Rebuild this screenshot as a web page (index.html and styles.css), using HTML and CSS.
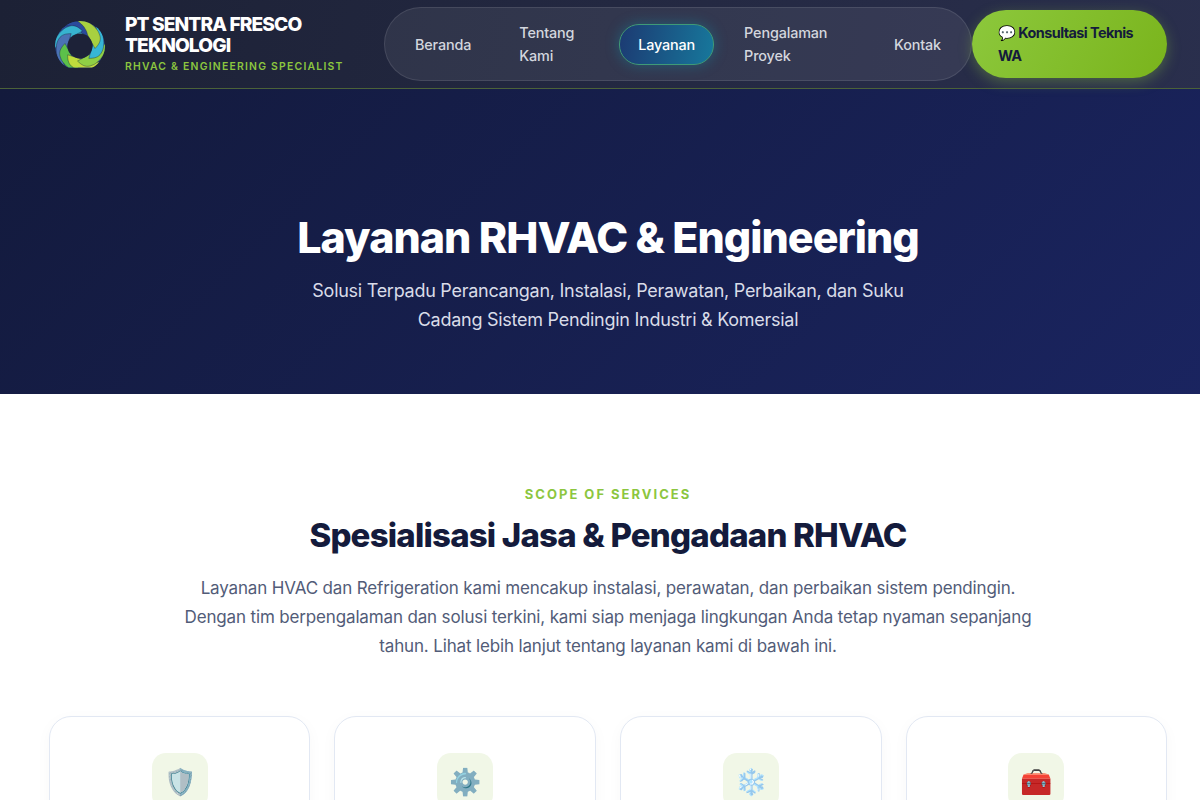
FILE: index.html
```html
<!DOCTYPE html>
<html lang="id">
<head>
    <meta charset="UTF-8">
    <meta name="viewport" content="width=device-width, initial-scale=1.0">
    <title>Layanan RHVAC &amp; Engineering</title>
    <link rel="stylesheet" href="styles.css">
</head>
<body>
    <div class="page">
        <header class="site-header">
            <a class="brand" href="#">
                <svg class="brand-logo" viewBox="-25 -25 50 50" aria-hidden="true">
                    <defs>
                        <clipPath id="logo-flat"><rect x="-25" y="-25" width="50" height="46.5"/></clipPath>
                        <clipPath id="logo-round"><circle r="25"/></clipPath>
                        <path id="blade" d="M-9 -23.3C2 -23 14 -17 16 -8C17 -4 15 -1 12 2L6 -9C5 -15 -1 -21 -9 -23.3z"/>
                    </defs>
                    <g clip-path="url(#logo-flat)">
                        <g clip-path="url(#logo-round)" stroke="#1d2238" stroke-width="0.3">
                            <circle r="25" fill="#2b4a9c" stroke="none"/>
                            <use href="#blade" fill="#37b3cf" transform="rotate(-60)"/>
                            <use href="#blade" fill="#2b4a9c" transform="rotate(-30) scale(1.25)"/>
                            <use href="#blade" fill="#37b3cf" transform="rotate(-90) scale(1.25)"/>
                            <use href="#blade" fill="#4a72b4" transform="rotate(-135) scale(1.25)"/>
                            <use href="#blade" fill="#5cc04a" transform="rotate(180) scale(1.25)"/>
                            <use href="#blade" fill="#c0dc3c" transform="rotate(135) scale(1.25)"/>
                            <use href="#blade" fill="#8fcf45" transform="rotate(90) scale(1.25)"/>
                            <use href="#blade" fill="#37b6d6" transform="rotate(45) scale(1.25)"/>
                            <use href="#blade" fill="#a8d040" transform="scale(1.25)"/>
                        </g>
                    </g>
                    <circle r="12.5" fill="#1d2238"/>
                </svg>
                <span class="brand-text">
                    <span class="brand-name">PT SENTRA FRESCO TEKNOLOGI</span>
                    <span class="brand-tag">RHVAC &amp; ENGINEERING SPECIALIST</span>
                </span>
            </a>
            <nav class="main-nav">
                <a href="#">Beranda</a>
                <a href="#" class="nav-short">Tentang Kami</a>
                <a href="#" class="active">Layanan</a>
                <a href="#" class="nav-long">Pengalaman Proyek</a>
                <a href="#">Kontak</a>
            </nav>
            <a class="cta" href="#">💬 Konsultasi Teknis WA</a>
        </header>

        <section class="hero">
            <h1>Layanan RHVAC &amp; Engineering</h1>
            <p>Solusi Terpadu Perancangan, Instalasi, Perawatan, Perbaikan, dan Suku Cadang Sistem Pendingin Industri &amp; Komersial</p>
        </section>

        <section class="services">
            <div class="section-head">
                <span class="eyebrow">SCOPE OF SERVICES</span>
                <h2>Spesialisasi Jasa &amp; Pengadaan RHVAC</h2>
                <p>Layanan HVAC dan Refrigeration kami mencakup instalasi, perawatan, dan perbaikan sistem pendingin. Dengan tim berpengalaman dan solusi terkini, kami siap menjaga lingkungan Anda tetap nyaman sepanjang tahun. Lihat lebih lanjut tentang layanan kami di bawah ini.</p>
            </div>
            <div class="service-grid">
                <div class="service-card"><span class="service-icon">🛡️</span></div>
                <div class="service-card"><span class="service-icon">⚙️</span></div>
                <div class="service-card"><span class="service-icon">❄️</span></div>
                <div class="service-card"><span class="service-icon">🧰</span></div>
            </div>
        </section>
    </div>
</body>
</html>
```
FILE: styles.css
```css
html {
    overflow-x: hidden;
}
body {
    margin: 0;
    font-family: "Inter", "Liberation Sans", sans-serif;
    color: #141b3c;
    background: #fff;
}
a {
    text-decoration: none;
    color: inherit;
}
.page {
    width: 1216px;
}
.site-header {
    display: flex;
    align-items: center;
    justify-content: space-between;
    height: 88px;
    padding: 0 49px 0 55px;
    background: linear-gradient(100deg, #1c2135 0%, #2a2f4d 100%);
    border-bottom: 1px solid #4c6238;
}
.brand {
    display: flex;
    align-items: center;
    gap: 20px;
    width: 329px;
    flex: none;
}
.brand-logo {
    width: 50px;
    height: 50px;
    flex: none;
    margin-top: 3px;
}
.brand-text {
    display: flex;
    flex-direction: column;
    margin-bottom: 2px;
}
.brand-name {
    font-size: 19.2px;
    font-weight: 800;
    line-height: 21px;
    letter-spacing: -0.9px;
    color: #fff;
}
.brand-tag {
    margin-top: 5px;
    font-size: 10.4px;
    font-weight: 600;
    line-height: 12px;
    letter-spacing: 1.23px;
    color: #8cc63f;
}
.main-nav {
    display: flex;
    align-items: center;
    gap: 12px;
    width: 588px;
    height: 74px;
    box-sizing: border-box;
    padding: 0 12px;
    border: 1px solid rgba(255, 255, 255, 0.1);
    border-radius: 37px;
    background: rgba(255, 255, 255, 0.07);
    flex: none;
}
.main-nav a {
    padding: 0 18px;
    font-size: 14.4px;
    font-weight: 500;
    line-height: 23px;
    letter-spacing: -0.15px;
    color: #d3d6de;
}
.main-nav a.nav-short {
    width: 70px;
}
.main-nav a.nav-long {
    width: 102px;
}
.main-nav a.active {
    padding: 8px 18px;
    color: #fff;
    border: 1px solid #3f9a77;
    border-radius: 20px;
    background: linear-gradient(100deg, #1c3a72, #17789c);
    box-shadow: 0 0 14px rgba(23, 140, 170, 0.45);
}
.cta {
    flex: none;
    width: 195px;
    height: 68px;
    box-sizing: border-box;
    padding: 11px 26px;
    border-radius: 34px;
    font-size: 14.4px;
    font-weight: 700;
    line-height: 23px;
    letter-spacing: -0.55px;
    color: #141b3c;
    background: linear-gradient(120deg, #8cc83c, #7ab41c);
    box-shadow: 0 4px 14px rgba(140, 198, 63, 0.35);
}
.hero {
    height: 305px;
    box-sizing: border-box;
    padding-top: 120px;
    text-align: center;
    color: #fff;
    background: linear-gradient(135deg, #131a3c 0%, #1a2460 100%);
}
.hero h1 {
    margin: 0;
    font-size: 43px;
    font-weight: 800;
    line-height: 56px;
    letter-spacing: -1px;
}
.hero p {
    width: 640px;
    margin: 11px auto 0;
    font-size: 18px;
    line-height: 29px;
    letter-spacing: -0.27px;
    color: #d9dce8;
}
.services {
    padding: 92px 48.8px 0;
}
.section-head {
    width: 880px;
    margin: 0 auto;
    text-align: center;
}
.eyebrow {
    display: block;
    font-size: 13px;
    font-weight: 700;
    line-height: 16px;
    letter-spacing: 2px;
    color: #8cc63f;
}
.section-head h2 {
    margin: 12px 0 0;
    font-size: 33px;
    font-weight: 800;
    line-height: 42px;
    letter-spacing: -0.8px;
    color: #141b3c;
}
.section-head p {
    margin: 18px 0 0;
    font-size: 17px;
    line-height: 29px;
    letter-spacing: -0.15px;
    color: #525c78;
}
.service-grid {
    display: grid;
    grid-template-columns: repeat(4, 1fr);
    gap: 24px;
    margin-top: 55px;
}
.service-card {
    height: 240px;
    box-sizing: border-box;
    padding: 36px 0;
    text-align: center;
    border: 1px solid #e2e8f3;
    border-radius: 22px;
    box-shadow: 0 4px 16px rgba(20, 27, 60, 0.03);
}
.service-icon {
    display: inline-flex;
    align-items: center;
    justify-content: center;
    width: 56px;
    height: 56px;
    border-radius: 14px;
    font-size: 26px;
    background: #f1f7e7;
}
```
